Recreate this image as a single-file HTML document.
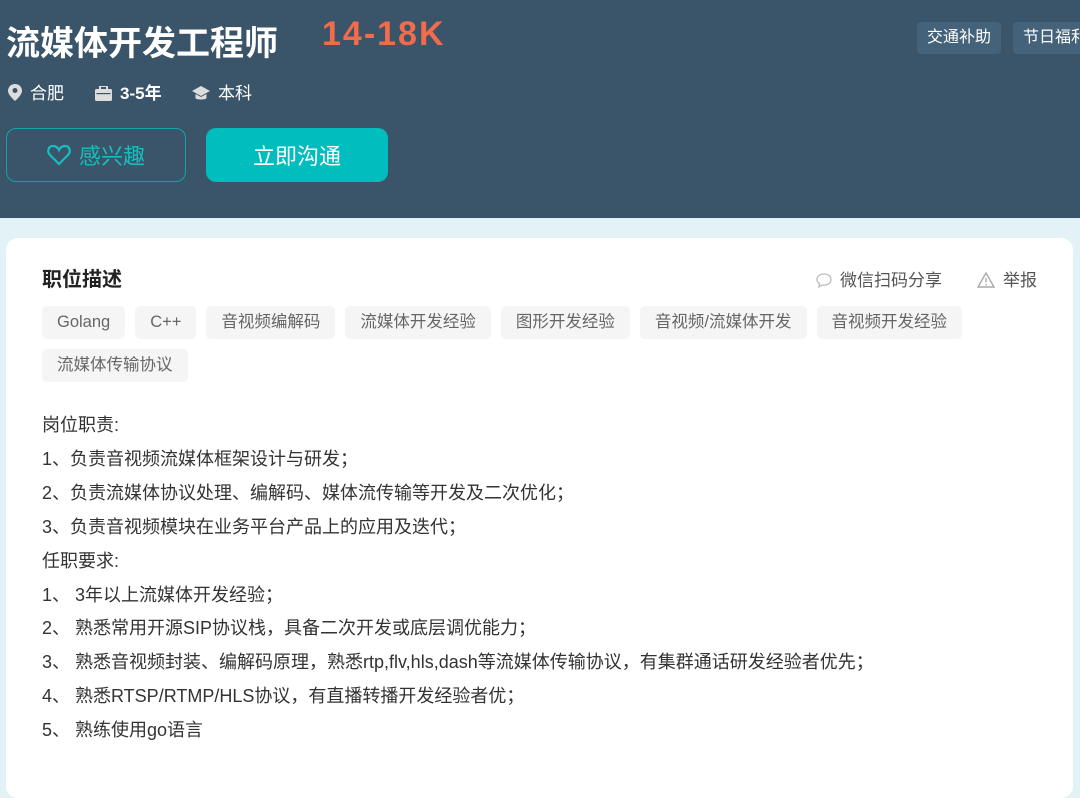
<!DOCTYPE html>
<html><head><meta charset="utf-8"><style>
*{margin:0;padding:0;box-sizing:border-box}
body{width:1080px;height:765px;overflow:hidden;background:#e3f2f6;font-family:"Liberation Sans","Noto Sans CJK SC",sans-serif;position:relative}
.hd{position:absolute;left:0;top:0;width:1080px;height:218px;background:#3a5569}
.title{position:absolute;left:6px;top:16px;font-size:34px;font-weight:bold;color:#fff;letter-spacing:0px}
.sal{position:absolute;left:322px;top:15px;font-size:34px;color:#f26b4a;font-weight:bold;letter-spacing:2px}
.meta{position:absolute;top:79px;font-size:17px;color:#fff}
.btn1{position:absolute;left:6px;top:128px;width:180px;height:54px;border:1.5px solid #15a3a8;border-radius:10px;color:#19bcbf;font-size:22px;display:flex;align-items:center;justify-content:center;gap:8px}
.btn2{position:absolute;left:206px;top:128px;width:182px;height:54px;background:#00bebd;border-radius:10px;color:#fff;font-size:22px;display:flex;align-items:center;justify-content:center}
.wt{position:absolute;top:22px;height:32px;background:#44627a;border-radius:4px;color:#fff;font-size:16px;line-height:32px;padding:0 10px;white-space:nowrap}
.card{position:absolute;left:6px;top:238px;width:1067px;height:560px;background:#fff;border-radius:12px}
.h2{position:absolute;left:42px;top:263px;font-size:20px;font-weight:bold;color:#222}
.act{position:absolute;top:266px;font-size:17px;color:#555}
.tags{position:absolute;left:42px;top:306px;width:960px;display:flex;flex-wrap:wrap;gap:10px}
.tag{height:33px;line-height:33px;padding:0 15px;background:#f5f5f5;border-radius:5px;color:#666;font-size:16.5px;white-space:nowrap}
.txt{position:absolute;left:42px;top:409px;font-size:18px;color:#333;line-height:33.9px;white-space:nowrap}
</style></head><body>
<div class="hd">
<div class="title">流媒体开发工程师</div>
<div class="sal">14-18K</div>
<div class="meta" style="left:8px"><svg width="14" height="17" viewBox="0 0 14 17" style="vertical-align:-2px;margin-right:8px"><path d="M7 0C3 0 0 3 0 7c0 4 7 10 7 10s7-6 7-10C14 3 11 0 7 0z" fill="#ddd"/><circle cx="7" cy="6.5" r="2.5" fill="#3a5569"/></svg>合肥</div>
<div class="meta" style="left:95px"><svg width="17" height="15" viewBox="0 0 17 15" style="vertical-align:-2px;margin-right:8px"><rect x="5" y="0" width="7" height="4" fill="none" stroke="#ddd" stroke-width="2"/><rect x="0" y="3" width="17" height="12" rx="1.5" fill="#ddd"/><rect x="1.5" y="7" width="14" height="1.2" fill="#3a5569"/></svg><b style="font-weight:600">3-5年</b></div>
<div class="meta" style="left:192px"><svg width="18" height="15" viewBox="0 0 18 15" style="vertical-align:-2px;margin-right:8px"><path d="M9 0L0 5l9 5 9-5z" fill="#ddd"/><path d="M3.5 8v4c0 2 11 2 11 0V8L9 11z" fill="#ddd"/></svg>本科</div>
<div class="btn1"><svg width="24" height="22" viewBox="0 0 24 22"><path d="M12 20L3 11C0 8 1 2 6 2c3 0 5 2 6 4 1-2 3-4 6-4 5 0 6 6 3 9z" fill="none" stroke="#19bcbf" stroke-width="2.2"/></svg>感兴趣</div>
<div class="btn2">立即沟通</div>
<div class="wt" style="left:917px">交通补助</div>
<div class="wt" style="left:1013px;width:90px">节日福利</div>
</div>
<div class="card"></div>
<div class="h2">职位描述</div>
<div class="act" style="left:816px"><svg width="16" height="15" viewBox="0 0 16 15" style="vertical-align:-2px;margin-right:8px"><path d="M8 1C4 1 1 3.5 1 6.5c0 1.8 1 3.3 2.6 4.3L3 14l3.3-2c.6.1 1.1.2 1.7.2 4 0 7-2.5 7-5.7S12 1 8 1z" fill="none" stroke="#bbb" stroke-width="1.3"/></svg>微信扫码分享</div>
<div class="act" style="left:977px"><svg width="18" height="16" viewBox="0 0 18 16" style="vertical-align:-2px;margin-right:8px"><path d="M9 1L1 15h16z" fill="none" stroke="#aaa" stroke-width="1.4"/><path d="M9 6v4.5M9 12v1.5" stroke="#aaa" stroke-width="1.4"/></svg>举报</div>
<div class="tags">
<span class="tag">Golang</span><span class="tag">C++</span><span class="tag">音视频编解码</span><span class="tag">流媒体开发经验</span><span class="tag">图形开发经验</span><span class="tag">音视频/流媒体开发</span><span class="tag">音视频开发经验</span><span class="tag">流媒体传输协议</span>
</div>
<div class="txt">岗位职责:<br>1、负责音视频流媒体框架设计与研发；<br>2、负责流媒体协议处理、编解码、媒体流传输等开发及二次优化；<br>3、负责音视频模块在业务平台产品上的应用及迭代；<br>任职要求:<br>1、 3年以上流媒体开发经验；<br>2、 熟悉常用开源SIP协议栈，具备二次开发或底层调优能力；<br>3、 熟悉音视频封装、编解码原理，熟悉rtp,flv,hls,dash等流媒体传输协议，有集群通话研发经验者优先；<br>4、 熟悉RTSP/RTMP/HLS协议，有直播转播开发经验者优；<br>5、 熟练使用go语言</div>
</body></html>
